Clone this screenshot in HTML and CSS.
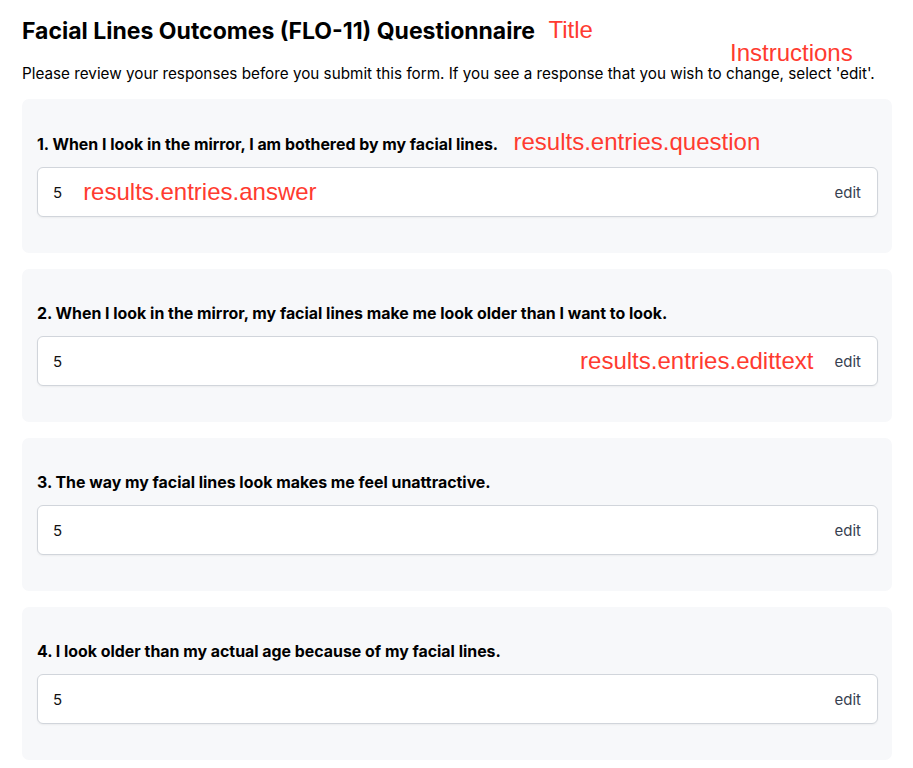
FILE: index.html
```html
<!DOCTYPE html>
<html lang="en">
<head>
<meta charset="utf-8">
<title>Facial Lines Outcomes (FLO-11) Questionnaire</title>
<link rel="stylesheet" href="styles.css">
</head>
<body>
<main class="page">
  <header class="head">
    <h1 class="title">Facial Lines Outcomes (FLO-11) Questionnaire <span class="note note-title">Title</span></h1>
    <p class="instructions">Please review your responses before you submit this form. If you see a response that you wish to change, select 'edit'.<span class="note note-instr">Instructions</span></p>
  </header>

  <section class="card">
    <p class="question">1. When I look in the mirror, I am bothered by my facial lines. <span class="note note-q">results.entries.question</span></p>
    <div class="answer"><span class="value">5</span><span class="note note-a">results.entries.answer</span><span class="spacer"></span><span class="edit">edit</span></div>
  </section>

  <section class="card">
    <p class="question">2. When I look in the mirror, my facial lines make me look older than I want to look.</p>
    <div class="answer"><span class="value">5</span><span class="spacer"></span><span class="note note-e">results.entries.edittext</span><span class="edit">edit</span></div>
  </section>

  <section class="card">
    <p class="question">3. The way my facial lines look makes me feel unattractive.</p>
    <div class="answer"><span class="value">5</span><span class="spacer"></span><span class="edit">edit</span></div>
  </section>

  <section class="card">
    <p class="question">4. I look older than my actual age because of my facial lines.</p>
    <div class="answer"><span class="value">5</span><span class="spacer"></span><span class="edit">edit</span></div>
  </section>
</main>
</body>
</html>
```

FILE: styles.css
```css
* { box-sizing: border-box; }
html, body { margin: 0; padding: 0; background: #ffffff; }
body {
  font-family: Inter, "Noto Sans", "Liberation Sans", sans-serif;
  color: #000;
}
.page {
  width: 870px;
  margin: 0 0 0 22px;
  padding-top: 16px;
  display: flex;
  flex-direction: column;
  gap: 16px;
}
.head { position: relative; }
.title {
  margin: 0;
  font-size: 23px;
  line-height: 30px;
  font-weight: 700;
}
.instructions {
  margin: 18px 0 0;
  font-size: 15.25px;
  line-height: 19px;
  position: relative;
}
.note {
  font-family: "Liberation Sans", Arial, sans-serif;
  color: #ff3b30;
  font-weight: 400;
  font-size: 24px;
  line-height: 18px;
  letter-spacing: 0;
}
.note-title { margin-left: 8px; vertical-align: 1px; }
.note-instr { position: absolute; left: 708px; top: -20px; }
.card {
  background: #f7f8fa;
  border-radius: 7px;
  padding: 34px 14px 36px 15px;
}
.question {
  margin: 0 0 11px;
  font-size: 15.9px;
  line-height: 22px;
  font-weight: 700;
}
.note-q { margin-left: 12px; }
.answer {
  height: 50px;
  background: #fff;
  border: 1px solid #d1d5db;
  border-radius: 6px;
  box-shadow: 0 1px 2px rgba(0,0,0,0.05);
  display: flex;
  align-items: center;
  padding: 0 16px 0 15px;
  font-size: 15px;
}
.value { color: #111; }
.note-a { margin-left: 21px; }
.spacer { flex: 1; }
.note-e { margin-right: 21px; }
.edit { color: #374151; }
```
